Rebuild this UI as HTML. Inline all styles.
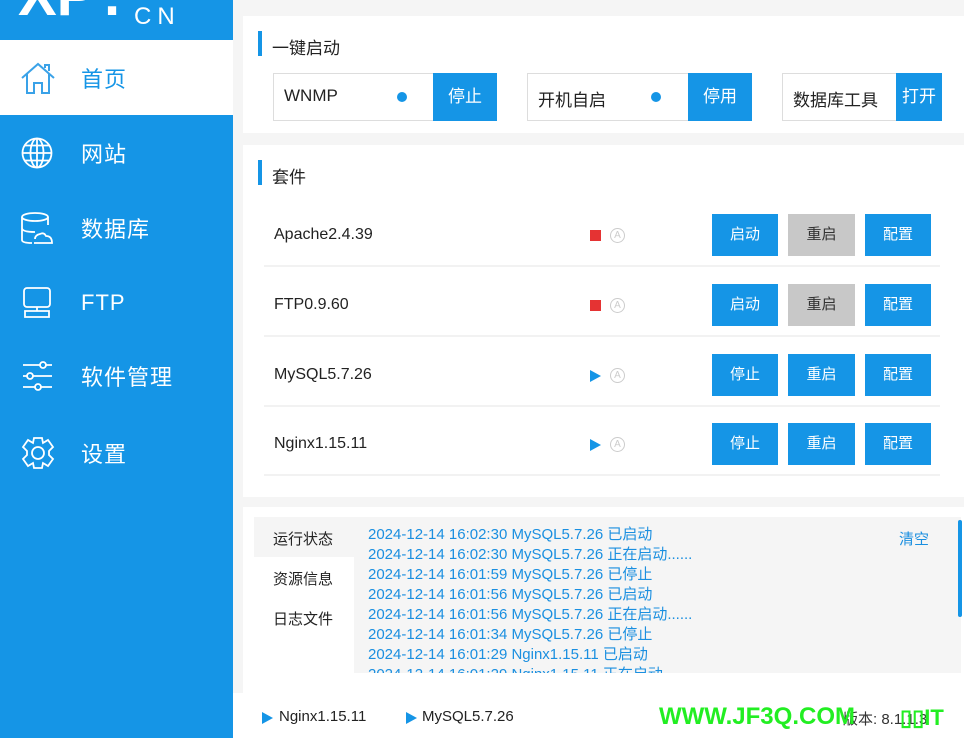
<!DOCTYPE html>
<html><head><meta charset="utf-8">
<style>
*{margin:0;padding:0;box-sizing:border-box}
body{width:964px;height:738px;overflow:hidden;background:#f5f5f5;font-family:"Liberation Sans","Noto Sans CJK SC",sans-serif;position:relative;color:#222}
.abs{position:absolute}
#side{left:0;top:0;width:233px;height:738px;background:#1595e6;overflow:hidden}
.nav{position:absolute;left:0;width:233px;height:75px;color:#fff;font-size:22px}
.nav span{position:absolute;left:81px;top:50%;transform:translateY(-50%);letter-spacing:1px}
.nav svg{position:absolute;left:20px;top:50%;transform:translateY(-50%)}
.card{position:absolute;left:243px;width:721px;background:#fff}
.bar{position:absolute;left:15px;width:4px;height:25px;background:#1595e6}
.ttl{position:absolute;left:29px;font-size:17px;color:#222}
.box{position:absolute;top:57px;height:48px;border:1px solid #ddd;background:#fff;font-size:17px}
.box .t{position:absolute;left:10px;top:12px}
.box .d{position:absolute;top:18px;width:10px;height:10px;border-radius:50%;background:#1595e6}
.box .b{position:absolute;top:-1px;height:48px;background:#1595e6;color:#fff;text-align:center;line-height:48px}
.row{position:absolute;left:21px;width:676px;height:70px;border-bottom:2px solid #f2f2f2}
.row .n{position:absolute;left:10px;top:29px;font-size:16px}
.row .st{position:absolute;left:326px;top:33px}
.row .a{position:absolute;left:346px;top:31px;width:15px;height:15px;border:1px solid #ccc;border-radius:50%;color:#ccc;font-size:10px;text-align:center;line-height:13px}
.btn{position:absolute;top:17px;height:42px;background:#1595e6;color:#fff;font-size:15px;text-align:center;line-height:42px}
.gray{background:#c8c8c8;color:#333}
.log{position:absolute;left:114px;color:#1a8fe0;font-size:15px;line-height:20px;white-space:nowrap}
</style></head><body>
<div id="side" class="abs">
  <div class="abs" style="left:18px;top:-33px;color:#fff;font-size:58px;font-weight:bold;line-height:1">XP</div>
  <div class="abs" style="left:104px;top:-33px;color:#fff;font-size:58px;font-weight:bold;line-height:1">.</div>
  <div class="abs" style="left:134px;top:5px;color:#fff;font-size:24px;letter-spacing:6px;line-height:1">CN</div>
  <div class="nav" style="top:40px;background:#fff;color:#1595e6"><svg width="36" height="34" viewBox="0 0 36 34" fill="none" stroke="#3aa2e8" stroke-width="2"><path d="M2 17 L18 3 L34 17 M7 13 V32 H14 V22 H22 V32 H29 V13 M25 7 V4 H29 V10"/></svg><span>首页</span></div>
  <div class="nav" style="top:115px"><svg width="34" height="34" viewBox="0 0 34 34" fill="none" stroke="#fff" stroke-width="1.8"><circle cx="17" cy="17" r="14.5"/><ellipse cx="17" cy="17" rx="6.5" ry="14.5"/><path d="M17 2.5V31.5M2.5 17H31.5M5 9.5H29M5 24.5H29"/></svg><span>网站</span></div>
  <div class="nav" style="top:190px"><svg width="34" height="34" viewBox="0 0 34 34" fill="none" stroke="#fff" stroke-width="1.8"><ellipse cx="15" cy="6" rx="13" ry="4"/><path d="M2 6V29Q2 32 12 32M28 6V14M2 17Q2 21 15 21M14 32H32Q32 25 26 25Q24 21 20 23Q15 24 15 28"/></svg><span>数据库</span></div>
  <div class="nav" style="top:265px"><svg width="34" height="34" viewBox="0 0 34 34" fill="none" stroke="#fff" stroke-width="1.8"><rect x="4" y="2" width="26" height="19" rx="3"/><path d="M17 21V25M5 25H29V31H5Z"/></svg><span>FTP</span></div>
  <div class="nav" style="top:338px"><svg width="34" height="34" viewBox="0 0 34 34" fill="none" stroke="#fff" stroke-width="1.8"><path d="M3 6H20M26 6H32M3 17H7M13 17H32M3 28H15M21 28H32"/><circle cx="23" cy="6" r="3"/><circle cx="10" cy="17" r="3"/><circle cx="18" cy="28" r="3"/></svg><span>软件管理</span></div>
  <div class="nav" style="top:415px"><svg width="36" height="36" viewBox="0 0 36 36" fill="none" stroke="#fff" stroke-width="1.8"><path d="M14 3H22L23 8L28 5L33 12L29 16V20L33 24L28 31L23 28L22 33H14L13 28L8 31L3 24L7 20V16L3 12L8 5L13 8Z"/><circle cx="18" cy="18" r="6"/></svg><span>设置</span></div>
</div>

<div class="card" style="top:16px;height:117px">
  <div class="bar" style="top:15px"></div><div class="ttl" style="top:18px">一键启动</div>
  <div class="box" style="left:30px;width:224px"><span class="t">WNMP</span><span class="d" style="left:123px"></span><div class="b" style="left:159px;width:64px">停止</div></div>
  <div class="box" style="left:284px;width:225px"><span class="t">开机自启</span><span class="d" style="left:123px"></span><div class="b" style="left:160px;width:64px">停用</div></div>
  <div class="box" style="left:539px;width:160px"><span class="t">数据库工具</span><div class="b" style="left:113px;width:46px">打开</div></div>
</div>

<div class="card" style="top:145px;height:352px">
  <div class="bar" style="top:15px"></div><div class="ttl" style="top:18px">套件</div>
  <div class="row" style="top:52px"><span class="n">Apache2.4.39</span><span class="st" style="width:11px;height:11px;background:#e53333"></span><span class="a">A</span><div class="btn" style="left:448px;width:66px">启动</div><div class="btn gray" style="left:524px;width:67px">重启</div><div class="btn" style="left:601px;width:66px">配置</div></div>
  <div class="row" style="top:122px"><span class="n">FTP0.9.60</span><span class="st" style="width:11px;height:11px;background:#e53333"></span><span class="a">A</span><div class="btn" style="left:448px;width:66px">启动</div><div class="btn gray" style="left:524px;width:67px">重启</div><div class="btn" style="left:601px;width:66px">配置</div></div>
  <div class="row" style="top:192px"><span class="n">MySQL5.7.26</span><span class="st" style="width:0;height:0;border-left:11px solid #1595e6;border-top:6px solid transparent;border-bottom:6px solid transparent"></span><span class="a">A</span><div class="btn" style="left:448px;width:66px">停止</div><div class="btn" style="left:524px;width:67px">重启</div><div class="btn" style="left:601px;width:66px">配置</div></div>
  <div class="row" style="top:261px"><span class="n">Nginx1.15.11</span><span class="st" style="width:0;height:0;border-left:11px solid #1595e6;border-top:6px solid transparent;border-bottom:6px solid transparent"></span><span class="a">A</span><div class="btn" style="left:448px;width:66px">停止</div><div class="btn" style="left:524px;width:67px">重启</div><div class="btn" style="left:601px;width:66px">配置</div></div>
</div>

<div class="card" style="top:507px;height:186px">
  <div class="abs" style="left:11px;top:10px;width:707px;height:156px;background:#f5f5f5;overflow:hidden">
    <div class="abs" style="left:0;top:40px;width:100px;height:116px;background:#fff"></div>
    <div class="abs" style="left:19px;top:11px;font-size:15px">运行状态</div>
    <div class="abs" style="left:19px;top:51px;font-size:15px">资源信息</div>
    <div class="abs" style="left:19px;top:91px;font-size:15px">日志文件</div>
    <div class="log" style="top:8px">2024-12-14 16:02:30 MySQL5.7.26 已启动<br>2024-12-14 16:02:30 MySQL5.7.26 正在启动......<br>2024-12-14 16:01:59 MySQL5.7.26 已停止<br>2024-12-14 16:01:56 MySQL5.7.26 已启动<br>2024-12-14 16:01:56 MySQL5.7.26 正在启动......<br>2024-12-14 16:01:34 MySQL5.7.26 已停止<br>2024-12-14 16:01:29 Nginx1.15.11 已启动<br>2024-12-14 16:01:29 Nginx1.15.11 正在启动</div>
    <div class="abs" style="left:645px;top:11px;color:#1a8fe0;font-size:15px">清空</div>
  </div>
  <div class="abs" style="left:715px;top:13px;width:4px;height:97px;background:#1595e6;border-radius:2px"></div>
</div>

<div class="abs" style="left:233px;top:693px;width:731px;height:45px;background:#fff">
  <div class="abs" style="left:29px;top:19px;width:0;height:0;border-left:11px solid #1595e6;border-top:6px solid transparent;border-bottom:6px solid transparent"></div>
  <div class="abs" style="left:46px;top:15px;font-size:15px">Nginx1.15.11</div>
  <div class="abs" style="left:173px;top:19px;width:0;height:0;border-left:11px solid #1595e6;border-top:6px solid transparent;border-bottom:6px solid transparent"></div>
  <div class="abs" style="left:189px;top:15px;font-size:15px">MySQL5.7.26</div>
  <div class="abs" style="left:610px;top:15px;font-size:15px;color:#333">版本: 8.1.1.3</div>
  <div class="abs" style="left:426px;top:10px;font-size:24px;font-weight:bold;color:#22ee22">WWW.JF3Q.COM</div>
  <div class="abs" style="left:667px;top:12px;font-size:22px;font-weight:bold;color:#22ee22">▯▯IT</div>
</div>
</body></html>
